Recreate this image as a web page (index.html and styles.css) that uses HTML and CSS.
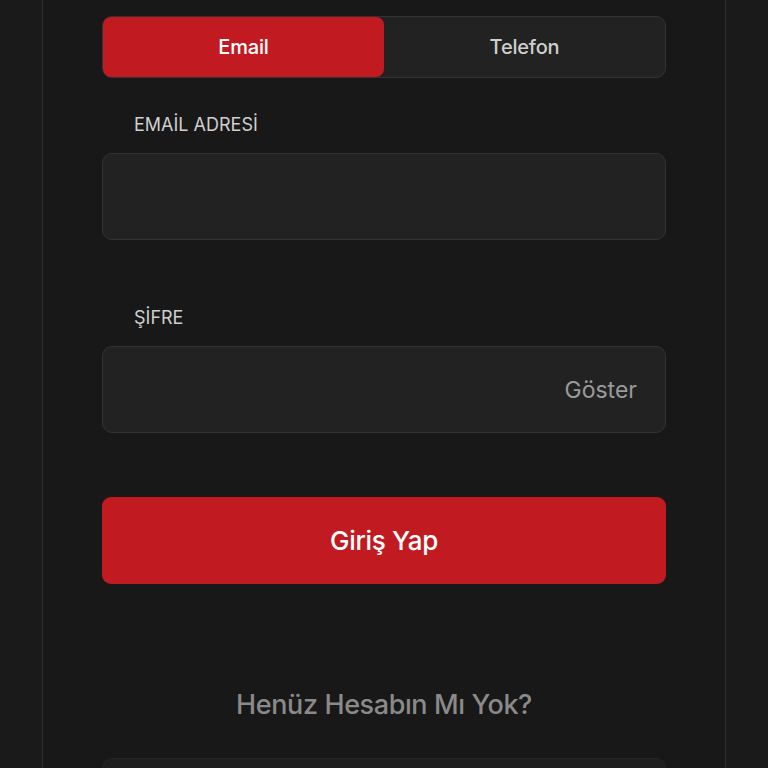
FILE: index.html
```html
<!DOCTYPE html>
<html lang="tr">
<head>
    <meta charset="UTF-8">
    <meta name="viewport" content="width=device-width, initial-scale=1.0">
    <title>Giriş Yap</title>
    <link rel="stylesheet" href="styles.css">
</head>
<body>
    <div class="card">
        <div class="tabs">
            <button class="tab active">Email</button>
            <button class="tab">Telefon</button>
        </div>

        <div class="field">
            <label class="field-label">EMAİL ADRESİ</label>
            <div class="input-box"></div>
        </div>

        <div class="field password">
            <label class="field-label">ŞİFRE</label>
            <div class="input-box">
                <span class="show-btn">Göster</span>
            </div>
        </div>

        <button class="btn-login">Giriş Yap</button>

        <div class="signup-text">Henüz Hesabın Mı Yok?</div>
        <div class="signup-box"></div>
    </div>
</body>
</html>
```

FILE: styles.css
```css
* {
    margin: 0;
    padding: 0;
    box-sizing: border-box;
}
html, body {
    height: 100%;
}
body {
    font-family: Inter, "Noto Sans", sans-serif;
    background-color: #1a1a1a;
    color: #ccc;
    overflow: hidden;
}
.card {
    margin: 0 42px;
    min-height: 100%;
    background: #181818;
    border-left: 1px solid #2e2e2e;
    border-right: 1px solid #2e2e2e;
    padding: 16px 59px 0;
}
.tabs {
    display: flex;
    height: 62px;
    background: #222;
    border: 1px solid #333;
    border-radius: 10px;
}
.tab {
    flex: 1;
    border: none;
    background: transparent;
    color: #cfcfcf;
    font-family: inherit;
    font-size: 20px;
    font-weight: 500;
    border-radius: 8px;
    letter-spacing: -0.2px;
}
.tab.active {
    background: #c11b21;
    color: #fff;
}
.field {
    margin-top: 36px;
}
.password {
    margin-top: 67px;
}
.field-label {
    display: block;
    padding-left: 32px;
    font-size: 18px;
    line-height: 22px;
    color: #cfcfcf;
    letter-spacing: 0;
}
.input-box {
    margin-top: 17px;
    height: 87px;
    background: #222;
    border: 1px solid #333;
    border-radius: 10px;
    display: flex;
    align-items: center;
    justify-content: flex-end;
    padding-right: 28px;
}
.show-btn {
    font-size: 23px;
    color: #9a9a9a;
}
.btn-login {
    display: block;
    width: 100%;
    margin-top: 64px;
    height: 87px;
    background: #c11b21;
    border: none;
    border-radius: 9px;
    color: #fff;
    font-family: inherit;
    font-size: 26px;
    font-weight: 500;
    letter-spacing: -0.3px;
}
.signup-text {
    margin-top: 104px;
    text-align: center;
    font-size: 27px;
    font-weight: 500;
    color: #8a8a8a;
    letter-spacing: -0.4px;
}
.signup-box {
    margin-top: 37px;
    height: 87px;
    background: #1e1e1e;
    border: 1px solid #262626;
    border-radius: 10px;
}
```
